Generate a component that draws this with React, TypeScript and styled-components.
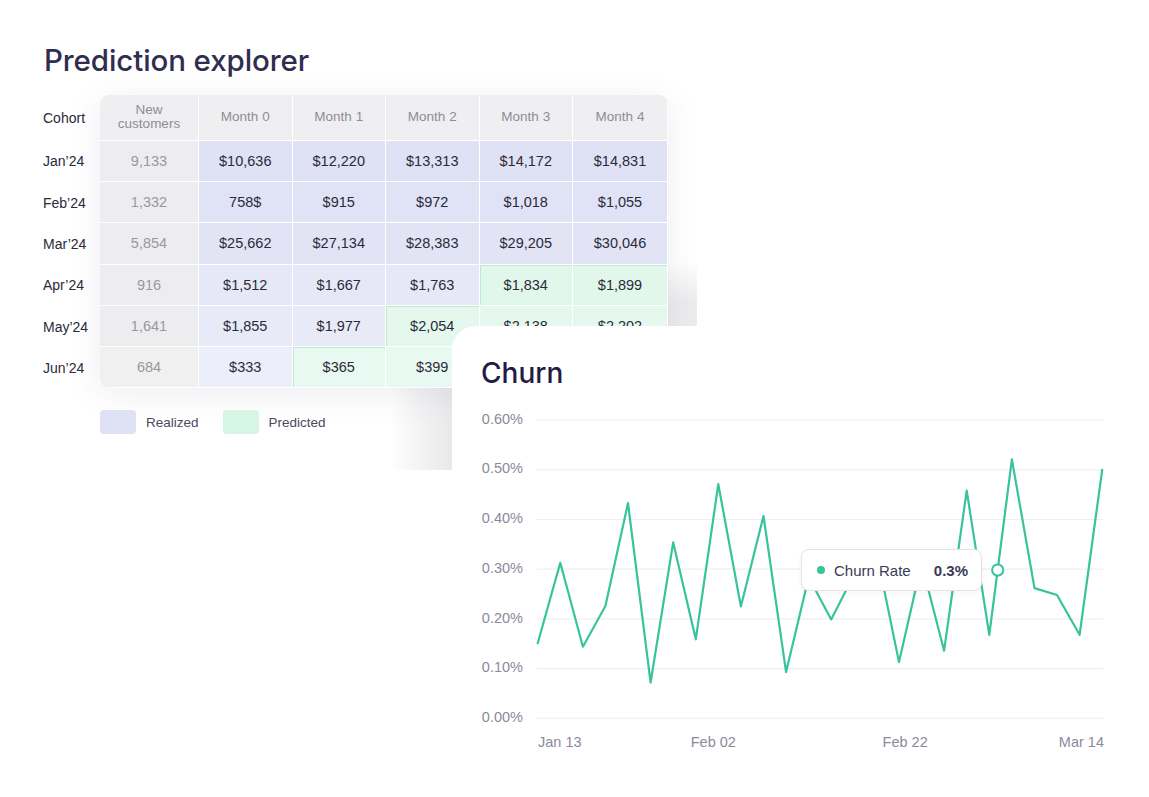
import React from "react";
import styled, { createGlobalStyle } from "styled-components";

const Global = createGlobalStyle`
  html, body { margin: 0; padding: 0; background: #ffffff; }
  body { font-family: "Liberation Sans", Arial, sans-serif; -webkit-font-smoothing: antialiased; }
`;

const Page = styled.div`
  position: relative;
  width: 1149px;
  height: 797px;
  overflow: hidden;
  background: #ffffff;
  box-sizing: border-box;
  padding: 43px 0 0 44px;
`;

const Title = styled.h1`
  position: relative;
  z-index: 1;
  margin: 0;
  font-family: Inter, "Noto Sans", sans-serif;
  font-weight: 500;
  font-size: 29.5px;
  line-height: 34px;
  letter-spacing: -0.1px;
  color: #2f2e4f;
`;

const TableWrap = styled.div`
  position: relative;
  z-index: 1;
  display: flex;
  margin-top: 18px;
`;

const CohortColumn = styled.div`
  width: 56px;
  display: grid;
  grid-template-rows: 45.7px repeat(6, 41.3px);
`;

const CohortLabel = styled.div`
  display: flex;
  align-items: center;
  margin-left: -1px;
  font-size: 14px;
  color: #2a2a3a;
`;

const Panel = styled.div`
  display: grid;
  grid-template-columns: 99px repeat(4, 93.5px) 95px;
  grid-template-rows: 45.7px repeat(6, 41.3px);
  border-radius: 9px 9px 0 9px;
  overflow: hidden;
  box-shadow: 0 6px 34px rgba(70, 70, 120, 0.09);
`;

type Kind = "header" | "count" | "realized" | "predicted";

const bg: Record<Kind, string> = {
  header: "#efeff1",
  count: "#ededef",
  realized: "#dfe1f5",
  predicted: "#d8f5e6",
};

const fg: Record<Kind, string> = {
  header: "#8d8d95",
  count: "#98989f",
  realized: "#2b2b38",
  predicted: "#2b2b38",
};

const Cell = styled.div<{ $kind: Kind; $fade?: number; $edgeTop?: boolean; $edgeLeft?: boolean }>`
  box-sizing: border-box;
  display: flex;
  align-items: center;
  justify-content: center;
  text-align: center;
  background: ${(p) => `color-mix(in srgb, ${bg[p.$kind]}, #ffffff ${p.$fade ?? 0}%)`};
  color: ${(p) => fg[p.$kind]};
  font-size: ${(p) => (p.$kind === "header" ? "13.5px" : "14.5px")};
  line-height: ${(p) => (p.$kind === "header" ? "14px" : "16px")};
  border-right: 1px solid #ffffff;
  border-bottom: 1px solid #ffffff;
  box-shadow: ${(p) =>
    [
      p.$edgeTop ? "inset 0 1px 0 #bfe9d2" : "",
      p.$edgeLeft ? "inset 1px 0 0 #bfe9d2" : "",
    ]
      .filter(Boolean)
      .join(", ") || "none"};
`;

const Legend = styled.div`
  position: relative;
  z-index: 1;
  display: flex;
  align-items: center;
  gap: 24px;
  margin: 22px 0 0 56px;
`;

const LegendItem = styled.div`
  display: flex;
  align-items: center;
  gap: 10px;
  font-size: 13.5px;
  color: #4a4a58;
`;

const Swatch = styled.span<{ $color: string }>`
  width: 36px;
  height: 24px;
  border-radius: 4px;
  background: ${(p) => p.$color};
`;

const Backdrop = styled.div`
  position: absolute;
  z-index: 0;
  left: 390px;
  top: 262px;
  width: 307px;
  height: 208px;
  background:
    linear-gradient(to bottom, #ffffff 0px, rgba(255, 255, 255, 0) 40px),
    linear-gradient(to right, #ffffff 0px, #f3f3f4 30px, #e9e9ea 62px, #ececed 100%);
`;

const Card = styled.div`
  position: absolute;
  z-index: 2;
  left: 452px;
  top: 326px;
  right: 0;
  bottom: 0;
  background: #ffffff;
  border-top-left-radius: 24px;
  box-sizing: border-box;
  padding: 30px 0 0 29px;
`;

const CardTitle = styled.h2`
  margin: 0;
  font-family: Inter, "Noto Sans", sans-serif;
  font-weight: 500;
  font-size: 28px;
  line-height: 34px;
  color: #1f1d45;
`;

const ChartBox = styled.div`
  position: relative;
  margin-top: 10px;
  width: 668px;
  height: 360px;
`;

const Tooltip = styled.div`
  position: absolute;
  left: 320px;
  top: 149px;
  width: 181px;
  height: 42px;
  box-sizing: border-box;
  display: flex;
  align-items: center;
  padding: 0 13px 0 15px;
  background: #ffffff;
  border: 1px solid #e3e3e8;
  border-radius: 8px;
  box-shadow: 0 2px 6px rgba(30, 30, 60, 0.04);
  font-size: 15px;
  color: #3a3956;
`;

const Dot = styled.span`
  width: 8px;
  height: 8px;
  border-radius: 50%;
  background: #37c39b;
  margin-right: 9px;
`;

const TipLabel = styled.span`
  flex: 1;
`;

const TipValue = styled.span`
  font-weight: 600;
  color: #3a3956;
`;

const months = ["Month 0", "Month 1", "Month 2", "Month 3", "Month 4"];

const rows = [
  { label: "Jan’24", count: "9,133", vals: ["$10,636", "$12,220", "$13,313", "$14,172", "$14,831"], pred: 5 },
  { label: "Feb’24", count: "1,332", vals: ["758$", "$915", "$972", "$1,018", "$1,055"], pred: 5 },
  { label: "Mar’24", count: "5,854", vals: ["$25,662", "$27,134", "$28,383", "$29,205", "$30,046"], pred: 5 },
  { label: "Apr’24", count: "916", vals: ["$1,512", "$1,667", "$1,763", "$1,834", "$1,899"], pred: 3 },
  { label: "May’24", count: "1,641", vals: ["$1,855", "$1,977", "$2,054", "$2,138", "$2,202"], pred: 2 },
  { label: "Jun’24", count: "684", vals: ["$333", "$365", "$399", "", ""], pred: 1 },
];

const rowFade = [0, 4, 10, 22, 30, 42];

const churn = [
  0.151, 0.313, 0.144, 0.226, 0.433, 0.072, 0.354, 0.159, 0.471, 0.225, 0.407, 0.093, 0.284,
  0.199, 0.288, 0.335, 0.113, 0.312, 0.136, 0.458, 0.168, 0.521, 0.262, 0.248, 0.168, 0.5,
];

const X0 = 56.7;
const DX = 22.58;
const Y0 = 318.3;
const PER = 497; // px per 1%

const yOf = (v: number) => Y0 - v * PER;

function ChurnChart() {
  const d = churn
    .map((v, i) => `${i === 0 ? "M" : "L"}${(X0 + i * DX).toFixed(1)} ${yOf(v).toFixed(1)}`)
    .join(" ");
  const ticks = [0, 0.1, 0.2, 0.3, 0.4, 0.5, 0.6];
  const labelStyle = {
    fontFamily: '"Liberation Sans", Arial, sans-serif',
    fontSize: "14.5px",
    fill: "#8b8a9c",
  } as const;
  return (
    <svg width={668} height={360} viewBox="0 0 668 360">
      {ticks.map((t) => (
        <g key={t}>
          <line x1={56} x2={622} y1={yOf(t)} y2={yOf(t)} stroke="#efeff3" strokeWidth={1.2} />
          <text x={42} y={yOf(t) + 3.6} textAnchor="end" style={labelStyle}>
            {t.toFixed(2)}%
          </text>
        </g>
      ))}
      <text x={57} y={346.5} textAnchor="start" style={labelStyle}>Jan 13</text>
      <text x={232.3} y={346.5} textAnchor="middle" style={labelStyle}>Feb 02</text>
      <text x={424.2} y={346.5} textAnchor="middle" style={labelStyle}>Feb 22</text>
      <text x={623} y={346.5} textAnchor="end" style={labelStyle}>Mar 14</text>
      <path d={d} fill="none" stroke="#37c39b" strokeWidth={2.2} strokeLinejoin="round" strokeLinecap="round" />
      <circle cx={516.7} cy={170} r={5.6} fill="#ffffff" stroke="#37c39b" strokeWidth={2} />
    </svg>
  );
}

export default function App() {
  return (
    <>
      <Global />
      <Page>
        <Backdrop />
        <Title>Prediction explorer</Title>
        <TableWrap>
          <CohortColumn>
            <CohortLabel>Cohort</CohortLabel>
            {rows.map((r) => (
              <CohortLabel key={r.label}>{r.label}</CohortLabel>
            ))}
          </CohortColumn>
          <Panel>
            <Cell $kind="header">
              New
              <br />
              customers
            </Cell>
            {months.map((m) => (
              <Cell key={m} $kind="header">
                {m}
              </Cell>
            ))}
            {rows.map((r, ri) => (
              <React.Fragment key={r.label}>
                <Cell $kind="count" $fade={ri === 5 ? 15 : 0}>{r.count}</Cell>
                {r.vals.map((v, ci) => {
                  const predicted = ci >= r.pred;
                  const above = ri > 0 ? ci >= rows[ri - 1].pred : true;
                  return (
                    <Cell
                      key={ci}
                      $kind={predicted ? "predicted" : "realized"}
                      $fade={rowFade[ri]}
                      $edgeTop={predicted && !above}
                      $edgeLeft={predicted && ci === r.pred}
                    >
                      {v}
                    </Cell>
                  );
                })}
              </React.Fragment>
            ))}
          </Panel>
        </TableWrap>
        <Legend>
          <LegendItem>
            <Swatch $color="#dfe1f5" />
            Realized
          </LegendItem>
          <LegendItem>
            <Swatch $color="#d6f5e5" />
            Predicted
          </LegendItem>
        </Legend>
        <Card>
          <CardTitle>Churn</CardTitle>
          <ChartBox>
            <ChurnChart />
            <Tooltip>
              <Dot />
              <TipLabel>Churn Rate</TipLabel>
              <TipValue>0.3%</TipValue>
            </Tooltip>
          </ChartBox>
        </Card>
      </Page>
    </>
  );
}
